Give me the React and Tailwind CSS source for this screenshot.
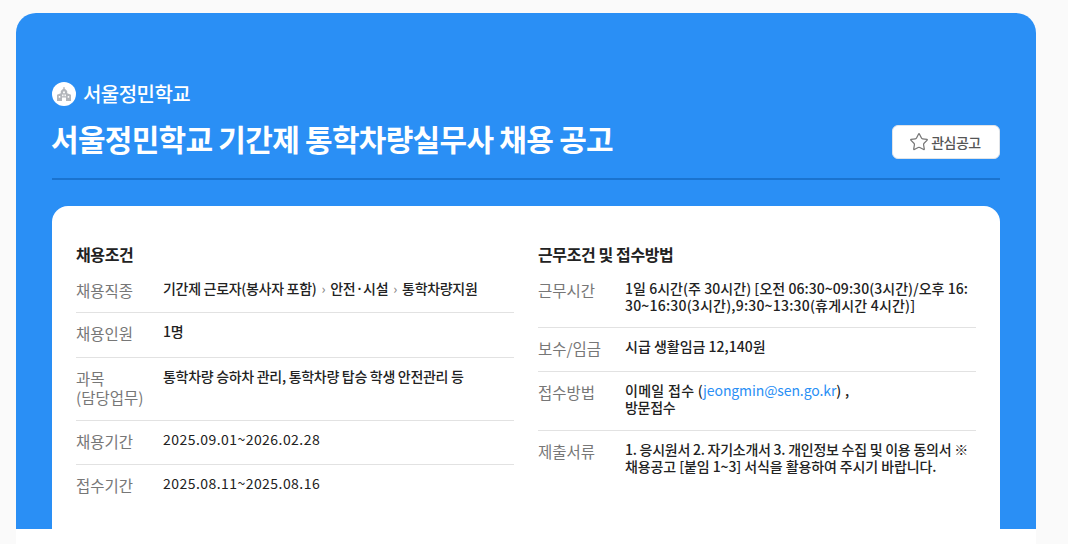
import { Star } from 'lucide-react';

const leftRows = [
  {
    label: '채용직종',
    value: (
      <>
        기간제 근로자(봉사자 포함)
        <span className="mx-[5px] text-[13px] text-[#888]">›</span>
        안전·시설
        <span className="mx-[5px] text-[13px] text-[#888]">›</span>
        통학차량지원
      </>
    ),
    rowClass: 'h-[43px]',
  },
  { label: '채용인원', value: '1명', rowClass: 'h-[45px]' },
  { label: <>과목<br />(담당업무)</>, value: '통학차량 승하차 관리, 통학차량 탑승 학생 안전관리 등', rowClass: 'h-[63px]' },
  { label: '채용기간', value: <span className="font-normal tracking-[0.45px]">2025.09.01~2026.02.28</span>, rowClass: 'h-[44px]' },
  { label: '접수기간', value: <span className="font-normal tracking-[0.45px]">2025.08.11~2025.08.16</span>, rowClass: 'h-[44px]', last: true },
];

const rightRows = [
  {
    label: '근무시간',
    value: (
      <>
        <span className="tracking-[0.05px]">1일 6시간(주 30시간) [오전 06:30~09:30(3시간)/오후 16:</span>
        <br />
        <span className="tracking-[0.2px]">30~16:30(3시간),9:30~13:30(휴게시간 4시간)]</span>
      </>
    ),
    rowClass: 'h-[58px]',
  },
  { label: '보수/임금', value: <span className="tracking-[0px]">시급 생활임금 12,140원</span>, rowClass: 'h-[44px]' },
  {
    label: '접수방법',
    value: (
      <>
        <span className="tracking-[0.3px]">이메일 접수 (</span>
        <span className="text-[#2a8ff5] font-normal tracking-[-0.1px]">jeongmin@sen.go.kr</span>
        <span className="tracking-[0.3px]">) ,</span>
        <br />
        방문접수
      </>
    ),
    rowClass: 'h-[59px]',
  },
  {
    label: '제출서류',
    value: (
      <>
        <span className="tracking-[-0.25px]">1. 응시원서 2. 자기소개서 3. 개인정보 수집 및 이용 동의서 ※</span>
        <br />
        <span className="tracking-[-0.1px]">채용공고 [붙임 1~3] 서식을 활용하여 주시기 바랍니다.</span>
      </>
    ),
    rowClass: 'h-[60px]',
    last: true,
  },
];

const SchoolIcon = () => (
  <svg viewBox="0 0 18 18" className="w-[18px] h-[18px]" fill="#b3b6bb">
    <path d="M8.4 2h1.2v1.6L12.2 6v2.2l3.8 1.6V16h-5v-3.4H7V16H2V9.8l3.8-1.6V6l2.6-2.4z" />
    <path fill="#fff" d="M8.1 6.4h1.8v1.8H8.1zM3.8 11h1.5v1.8H3.8zM12.7 11h1.5v1.8h-1.5zM7.1 9.6h1.4v1.6H7.1zM9.5 9.6h1.4v1.6H9.5z" />
  </svg>
);

const InfoRow = ({ row }) => (
  <div className={`flex ${row.rowClass} ${row.last ? '' : 'border-b border-[#e2e2e2]'}`}>
    <div className="w-[87px] shrink-0 pt-[11px] text-[15.5px] leading-[19px] text-[#777]">{row.label}</div>
    <div className="flex-1 pt-[10px] text-[14px] leading-[17px] font-medium text-[#222] tracking-[-0.3px] whitespace-nowrap">{row.value}</div>
  </div>
);

export default function App() {
  return (
    <div className="h-[544px] overflow-hidden bg-[#fafafa] pl-[16px] pr-[32px] pt-[13px] font-['Noto_Sans_CJK_KR','Noto_Sans',sans-serif]">
      <div className="h-[531px] bg-white rounded-t-[20px]">
        <div className="h-[516px] bg-[#2a8ff5] rounded-t-[20px] px-[36px] pt-[68px] overflow-hidden">
          {/* Header */}
          <div className="flex items-center gap-[7px] h-[26px]">
            <div className="w-[24px] h-[24px] rounded-full bg-white flex items-center justify-center">
              <SchoolIcon />
            </div>
            <span className="text-[20px] font-medium text-white tracking-[-0.55px]">서울정민학교</span>
          </div>
          <div className="flex items-end justify-between h-[73px] border-b-2 border-[#1a73cf] pb-[19px]">
            <h1 className="text-[30px] leading-[40px] font-bold text-white tracking-[-0.72px] -ml-[1px] mb-[1px]">
              서울정민학교 기간제 통학차량실무사 채용 공고
            </h1>
            <button className="w-[108px] h-[34px] bg-white rounded-[6px] border border-[#dfe3e8] flex items-center justify-center gap-[2px] text-[14px] font-medium text-[#555] tracking-[-0.5px]">
              <Star className="w-[20px] h-[20px] text-[#777] -ml-[2px]" strokeWidth={1.5} />
              관심공고
            </button>
          </div>

          {/* Content */}
          <div className="mt-[26px] h-[340px] bg-white rounded-[16px] px-[24px] pt-[36px] flex gap-[24px]">
            <div className="w-[438px]">
              <h2 className="text-[16px] leading-[24px] font-bold text-[#222] tracking-[-0.4px] mb-[4px]">채용조건</h2>
              {leftRows.map((row, i) => (
                <InfoRow key={i} row={row} />
              ))}
            </div>
            <div className="w-[438px]">
              <h2 className="text-[16px] leading-[24px] font-bold text-[#222] tracking-[-0.4px] mb-[4px]">근무조건 및 접수방법</h2>
              {rightRows.map((row, i) => (
                <InfoRow key={i} row={row} />
              ))}
            </div>
          </div>
        </div>
      </div>
    </div>
  );
}
